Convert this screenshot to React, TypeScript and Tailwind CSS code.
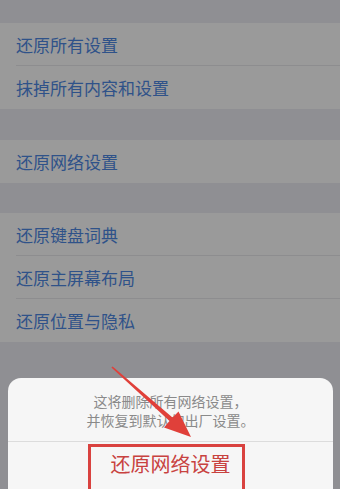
import React from 'react';

const groups: string[][] = [
  ['还原所有设置', '抹掉所有内容和设置'],
  ['还原网络设置'],
  ['还原键盘词典', '还原主屏幕布局', '还原位置与隐私'],
];

function Row({ label, last }: { label: string; last: boolean }) {
  return (
    <div className="relative flex h-[43px] items-center pl-4">
      <span className="text-[17px] leading-none text-[#2f5289]">{label}</span>
      {!last && <div className="absolute bottom-0 left-4 right-0 h-px bg-[#8d8d8f]" />}
    </div>
  );
}

export default function App() {
  return (
    <div
      className="relative h-[489px] w-[340px] overflow-hidden bg-[#8f8f93]"
      style={{ fontFamily: '"Noto Sans CJK SC", "Noto Sans", sans-serif' }}
    >
      {/* dimmed settings list */}
      <div className="flex flex-col gap-[30px] pt-[23px]">
        {groups.map((rows, g) => (
          <div key={g} className={`bg-[#9a9a9a] ${g === 1 ? 'mt-px' : ''}`}>
            {rows.map((r, i) => (
              <Row key={r} label={r} last={i === rows.length - 1} />
            ))}
          </div>
        ))}
      </div>

      {/* action sheet */}
      <div className="absolute left-2 right-[7px] top-[378px] h-[130px] rounded-[13px] bg-[#f6f6f6]">
        <div className="px-4 pb-[11px] pt-[14px] text-center text-[14px] leading-[19px] text-[#8a8a8a]">
          <p>这将删除所有网络设置，</p>
          <p>并恢复到默认的出厂设置。</p>
        </div>
        <div className="h-px bg-[#dcdcdc]" />
        <div className="pt-[10px] text-center text-[20px] leading-[24px] text-[#c8423f]">
          还原网络设置
        </div>
      </div>

      {/* annotation box */}
      <div className="absolute left-[88px] top-[444px] h-[60px] w-[157px] border-[3px] border-[#d9423f]" />

      {/* annotation arrow */}
      <svg className="absolute left-0 top-0" width="340" height="489" viewBox="0 0 340 489">
        <polygon
          fill="#e0403a"
          points="112.6,366.4 172.5,417.6 178.5,411.5 191,437 164,427.5 169.5,421 111.4,367.6"
        />
      </svg>
    </div>
  );
}
